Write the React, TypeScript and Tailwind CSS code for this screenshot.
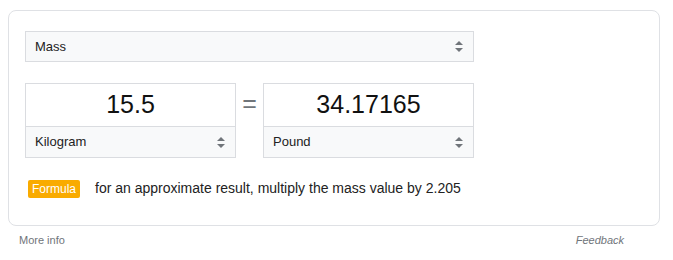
import React from "react";

function Arrows() {
  return (
    <svg width="8" height="11" viewBox="0 0 8 11" className="shrink-0">
      <path d="M4 0 L8 4 L0 4 Z" fill="#70757a" />
      <path d="M0 7 L8 7 L4 11 Z" fill="#70757a" />
    </svg>
  );
}

function Select({ label, className = "" }: { label: string; className?: string }) {
  return (
    <div className={"flex items-center justify-between bg-[#f8f9fa] pl-[9px] pr-[10px] text-[13px] text-[#222]" + " " + className}>
      <span>{label}</span>
      <Arrows />
    </div>
  );
}

function UnitBox({ value, unit }: { value: string; unit: string }) {
  return (
    <div className="flex w-[211px] flex-col border border-[#dadce0]">
      <div className="flex h-[42px] items-center justify-center bg-white text-[25px] text-[#111]">{value}</div>
      <Select label={unit} className="h-[31px] border-t border-[#dadce0]" />
    </div>
  );
}

export default function App() {
  return (
    <div className="h-[260px] w-[673px] bg-white" style={{ fontFamily: '"Liberation Sans", Arial, sans-serif' }}>
      <div className="pl-[8px] pt-[10px]">
        <div className="h-[216px] w-[652px] rounded-[8px] border border-[#dfe1e5] px-[16px] pt-[20px]">
          <Select label="Mass" className="h-[31px] w-[449px] border border-[#dadce0]" />
          <div className="mt-[21px] flex items-start">
            <UnitBox value="15.5" unit="Kilogram" />
            <div className="flex h-[42px] w-[27px] items-center justify-center text-[25px] text-[#70757a]">=</div>
            <UnitBox value="34.17165" unit="Pound" />
          </div>
          <div className="mt-[20px] flex items-center pl-[3px]">
            <span className="flex h-[18px] items-center rounded-[2px] bg-[#f9ab00] px-[4px] text-[12px] text-white">Formula</span>
            <span className="ml-[15px] text-[14px] text-[#222]">for an approximate result, multiply the mass value by 2.205</span>
          </div>
        </div>
      </div>
      <div className="flex w-[624px] justify-between pl-[19px] pt-[6px] text-[11px] text-[#70757a]">
        <span>More info</span>
        <span className="italic">Feedback</span>
      </div>
    </div>
  );
}
